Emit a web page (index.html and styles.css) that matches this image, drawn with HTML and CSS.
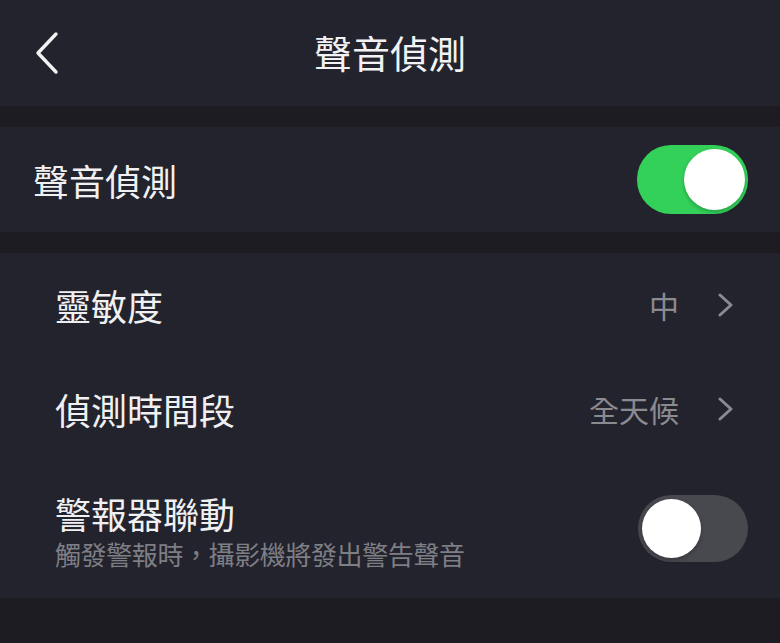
FILE: index.html
```html
<!DOCTYPE html>
<html lang="zh-Hant">
<head>
    <meta charset="UTF-8">
    <meta name="viewport" content="width=device-width, initial-scale=1.0">
    <title>聲音偵測</title>
    <link rel="stylesheet" href="styles.css">
</head>
<body>
    <header class="nav">
        <button class="back" aria-label="返回">
            <svg width="26" height="44" viewBox="0 0 26 44">
                <path d="M22 3 L4 22 L22 41" fill="none" stroke="#f2f2f2" stroke-width="3.4" stroke-linecap="round" stroke-linejoin="round"/>
            </svg>
        </button>
        <h1 class="title">聲音偵測</h1>
        <span></span>
    </header>

    <section class="card">
        <div class="row main">
            <span class="label">聲音偵測</span>
            <span class="switch on"><span class="knob"></span></span>
        </div>
    </section>

    <section class="card group">
        <div class="row">
            <span class="label">靈敏度</span>
            <span class="value">中 <svg class="chev" width="17" height="24" viewBox="0 0 17 24"><path d="M3 2 L14 12 L3 22" fill="none" stroke="#8a8a90" stroke-width="3" stroke-linecap="round" stroke-linejoin="round"/></svg></span>
        </div>
        <div class="row">
            <span class="label">偵測時間段</span>
            <span class="value">全天候 <svg class="chev" width="17" height="24" viewBox="0 0 17 24"><path d="M3 2 L14 12 L3 22" fill="none" stroke="#8a8a90" stroke-width="3" stroke-linecap="round" stroke-linejoin="round"/></svg></span>
        </div>
        <div class="row tall">
            <div class="text">
                <span class="label">警報器聯動</span>
                <span class="hint">觸發警報時，攝影機將發出警告聲音</span>
            </div>
            <span class="switch"><span class="knob"></span></span>
        </div>
    </section>
</body>
</html>
```

FILE: styles.css
```css
body {
    margin: 0;
    background: #1c1c22;
    color: #f0f0f2;
    font-family: "Noto Sans CJK TC", "Noto Sans", sans-serif;
}
.nav {
    height: 106px;
    background: #23232d;
    display: grid;
    grid-template-columns: 1fr auto 1fr;
    align-items: center;
}
.back {
    background: none;
    border: none;
    padding: 0;
    margin-left: 34px;
    width: 26px;
    height: 44px;
    justify-self: start;
    cursor: pointer;
}
.back svg {
    display: block;
}
.title {
    margin: 0;
    font-size: 38px;
    font-weight: 400;
    line-height: 1;
    color: #f2f2f4;
    padding-bottom: 2px;
}
.card {
    background: #23232d;
    margin-top: 21px;
}
.row {
    display: flex;
    align-items: center;
    justify-content: space-between;
    height: 104px;
    padding: 0 32px 0 55px;
}
.row.main {
    height: 105px;
    padding-left: 33px;
}
.row.tall {
    height: 137px;
    align-items: flex-start;
}
.label {
    font-size: 36px;
    line-height: 1;
}
.value {
    display: flex;
    align-items: center;
    gap: 38px;
    font-size: 30px;
    color: #8a8a90;
    padding-right: 14px;
}
.chev {
    display: block;
}
.text {
    display: flex;
    flex-direction: column;
    gap: 10px;
    padding-top: 34px;
}
.hint {
    font-size: 26px;
    line-height: 1;
    color: #7e7e85;
    letter-spacing: -0.4px;
}
.switch {
    width: 110px;
    height: 67px;
    border-radius: 34px;
    background: #48484f;
    display: flex;
    align-items: center;
    padding: 0 4px;
    box-sizing: border-box;
}
.row.tall .switch {
    margin-top: 34px;
}
.switch.on {
    background: #33d15a;
    justify-content: flex-end;
    height: 69px;
    width: 111px;
    padding: 0 3px;
}
.knob {
    width: 59px;
    height: 59px;
    border-radius: 50%;
    background: #fff;
    box-shadow: 0 2px 4px rgba(0, 0, 0, 0.25);
}
.switch.on .knob {
    width: 61px;
    height: 61px;
}
```
